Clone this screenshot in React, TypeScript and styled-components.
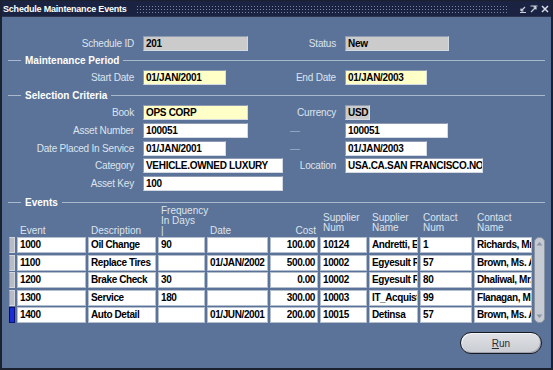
import React from 'react'
import styled, { createGlobalStyle } from 'styled-components'

const GlobalStyle = createGlobalStyle`
  html, body {
    margin: 0;
    padding: 0;
    background: #5b7398;
  }
  body {
    font-family: 'Liberation Sans', Arial, sans-serif;
  }
`

const COLS = '6px 69px 68px 47px 61px 48px 47px 49px 52px 58px 11px'

interface EventRow {
  event: string
  description: string
  frequency: string
  date: string
  cost: string
  supplierNum: string
  supplierName: string
  contactNum: string
  contactName: string
}

const events: EventRow[] = [
  { event: '1000', description: 'Oil Change', frequency: '90', date: '', cost: '100.00', supplierNum: '10124', supplierName: 'Andretti, Evan', contactNum: '1', contactName: 'Richards, Mr. Tom' },
  { event: '1100', description: 'Replace Tires', frequency: '', date: '01/JAN/2002', cost: '500.00', supplierNum: '10002', supplierName: 'Egyesult Ruhaz', contactNum: '57', contactName: 'Brown, Ms. Ann' },
  { event: '1200', description: 'Brake Check', frequency: '30', date: '', cost: '0.00', supplierNum: '10002', supplierName: 'Egyesult Ruhaz', contactNum: '80', contactName: 'Dhaliwal, Mr. Raj' },
  { event: '1300', description: 'Service', frequency: '180', date: '', cost: '300.00', supplierNum: '10003', supplierName: 'IT_Acquisto', contactNum: '99', contactName: 'Flanagan, Mr. Ian' },
  { event: '1400', description: 'Auto Detail', frequency: '', date: '01/JUN/2001', cost: '200.00', supplierNum: '10015', supplierName: 'Detinsa', contactNum: '57', contactName: 'Brown, Ms. Ann' },
]

const App: React.FC = () => {
  return (
    <>
      <GlobalStyle />
      <Window>
        <TitleBar>
          <Title>Schedule Maintenance Events</Title>
          <Dots />
          <WinIcons>
            <svg width="8" height="8" viewBox="0 0 8 8">
              <path d="M1 7.5h6M2 6l4-4M2 6V3.5M2 6h2.5" stroke="#c9cfdc" strokeWidth="1.2" fill="none" />
            </svg>
            <svg width="8" height="8" viewBox="0 0 8 8">
              <path d="M0.5 1h7M1 7l5-5M6 2v2.5M6 2H3.5" stroke="#c9cfdc" strokeWidth="1.2" fill="none" />
            </svg>
            <svg width="8" height="8" viewBox="0 0 8 8">
              <path d="M1 1l6 6M7 1l-6 6" stroke="#d6dbe6" strokeWidth="1.5" fill="none" />
            </svg>
          </WinIcons>
        </TitleBar>

        <Body>
          <Row>
            <Half $w={286}>
              <Label $w={132}>Schedule ID</Label>
              <Field $w={105} $bg="#cbcbcb">201</Field>
            </Half>
            <Half>
              <Label $w={48}>Status</Label>
              <Field $w={104} $bg="#cbcbcb">New</Field>
            </Half>
          </Row>

          <Section $mt={4}>Maintenance Period</Section>
          <Row $mt={5}>
            <Half $w={286}>
              <Label $w={132}>Start Date</Label>
              <Field $w={83} $bg="#ffffc8">01/JAN/2001</Field>
            </Half>
            <Half>
              <Label $w={48}>End Date</Label>
              <Field $w={82} $bg="#ffffc8">01/JAN/2003</Field>
            </Half>
          </Row>

          <Section $mt={5}>Selection Criteria</Section>
          <Row $mt={5}>
            <Half $w={286}>
              <Label $w={132}>Book</Label>
              <Field $w={105} $bg="#ffffc8">OPS CORP</Field>
            </Half>
            <Half>
              <Label $w={48}>Currency</Label>
              <Field $w={25} $bg="#cbcbcb">USD</Field>
            </Half>
          </Row>
          <Row $mt={2.75}>
            <Half $w={286}>
              <Label $w={132}>Asset Number</Label>
              <Field $w={105}>100051</Field>
            </Half>
            <Half>
              <Label $w={48} $dash>—</Label>
              <Field $w={103}>100051</Field>
            </Half>
          </Row>
          <Row $mt={2.75}>
            <Half $w={286}>
              <Label $w={132}>Date Placed In Service</Label>
              <Field $w={83}>01/JAN/2001</Field>
            </Half>
            <Half>
              <Label $w={48} $dash>—</Label>
              <Field $w={82}>01/JAN/2003</Field>
            </Half>
          </Row>
          <Row $mt={2.75}>
            <Half $w={286}>
              <Label $w={132}>Category</Label>
              <Field $w={140}>VEHICLE.OWNED LUXURY</Field>
            </Half>
            <Half>
              <Label $w={48}>Location</Label>
              <Field $w={138}>USA.CA.SAN FRANCISCO.NONE</Field>
            </Half>
          </Row>
          <Row $mt={2.75}>
            <Half $w={286}>
              <Label $w={132}>Asset Key</Label>
              <Field $w={140}>100</Field>
            </Half>
          </Row>

          <Section $mt={6}>Events</Section>
          <HeadRow>
            <span />
            <HeadCell>Event</HeadCell>
            <HeadCell>Description</HeadCell>
            <HeadCell>
              Frequency
              <br />
              In Days
              <br />|
            </HeadCell>
            <HeadCell>Date</HeadCell>
            <HeadCell $right>Cost</HeadCell>
            <HeadCell $raised>
              Supplier
              <br />
              Num
            </HeadCell>
            <HeadCell $raised>
              Supplier
              <br />
              Name
            </HeadCell>
            <HeadCell $raised>
              Contact
              <br />
              Num
            </HeadCell>
            <HeadCell $raised>
              Contact
              <br />
              Name
            </HeadCell>
          </HeadRow>
          <Grid>
            {events.map((e, i) => (
              <React.Fragment key={e.event}>
                <Indicator $active={i === events.length - 1} />
                <Cell>{e.event}</Cell>
                <Cell>{e.description}</Cell>
                <Cell>{e.frequency}</Cell>
                <Cell>{e.date}</Cell>
                <Cell $right>{e.cost}</Cell>
                <Cell>{e.supplierNum}</Cell>
                <Cell>{e.supplierName}</Cell>
                <Cell>{e.contactNum}</Cell>
                <Cell>{e.contactName}</Cell>
              </React.Fragment>
            ))}
            <ScrollBar>
              <svg width="7" height="5" viewBox="0 0 7 5">
                <path d="M0.5 4.5L3.5 1l3 3.5z" fill="#8d95a6" />
              </svg>
              <svg width="7" height="5" viewBox="0 0 7 5">
                <path d="M0.5 0.5L3.5 4l3-3.5z" fill="#8d95a6" />
              </svg>
            </ScrollBar>
          </Grid>

          <ButtonRow>
            <RunButton>
              <u>R</u>un
            </RunButton>
          </ButtonRow>
        </Body>
      </Window>
    </>
  )
}

export default App

const Window = styled.div`
  width: 553px;
  height: 370px;
  box-sizing: border-box;
  border: 2px solid #1c2130;
  border-top-width: 1px;
  background: #5b7398;
  display: flex;
  flex-direction: column;
  overflow: hidden;
`

const TitleBar = styled.div`
  height: 15px;
  flex: none;
  display: flex;
  align-items: center;
  padding: 0 2px 0 1px;
  background: #1a2442;
  border-bottom: 1px solid #2b3550;
`

const Title = styled.div`
  color: #ffffff;
  font-weight: bold;
  font-size: 9px;
  letter-spacing: -0.2px;
  white-space: nowrap;
`

const Dots = styled.div`
  flex: 1;
  height: 8px;
  margin: 0 10px 0 9px;
  background-image: radial-gradient(circle, #7885a4 0.7px, transparent 0.9px);
  background-size: 3px 3px;
`

const WinIcons = styled.div`
  display: flex;
  align-items: center;
  gap: 3px;
`

const Body = styled.div`
  flex: 1;
  display: flex;
  flex-direction: column;
  padding: 19px 6px 0 0;
`

const Row = styled.div<{ $mt?: number }>`
  display: flex;
  height: 15px;
  margin-top: ${p => p.$mt ?? 0}px;
`

const Half = styled.div<{ $w?: number }>`
  display: flex;
  align-items: center;
  gap: 9px;
  flex: none;
  width: ${p => (p.$w ? `${p.$w}px` : 'auto')};
`

const Label = styled.div<{ $w: number; $dash?: boolean }>`
  width: ${p => p.$w}px;
  flex: none;
  text-align: ${p => (p.$dash ? 'left' : 'right')};
  color: ${p => (p.$dash ? '#9eb0c8' : '#dde4ee')};
  font-size: 10px;
  letter-spacing: -0.2px;
  white-space: nowrap;
  padding-left: ${p => (p.$dash ? '2px' : '0')};
  box-sizing: border-box;
`

const Field = styled.div<{ $w: number; $bg?: string }>`
  width: ${p => p.$w}px;
  height: 15px;
  box-sizing: border-box;
  flex: none;
  background: ${p => p.$bg ?? '#ffffff'};
  border: 1px solid #d4dae3;
  border-top-color: #8e9bb0;
  border-left-color: #8e9bb0;
  padding: 0 2px;
  font-size: 10px;
  font-weight: bold;
  letter-spacing: -0.3px;
  line-height: 13px;
  color: #000;
  white-space: nowrap;
  overflow: hidden;
`

const Section = styled.div<{ $mt: number }>`
  display: flex;
  align-items: center;
  gap: 4px;
  height: 10px;
  margin: ${p => p.$mt}px 0 0 6px;
  color: #ffffff;
  font-size: 10px;
  font-weight: bold;
  white-space: nowrap;

  &::before {
    content: '';
    width: 13px;
    border-top: 1px solid #aab8cc;
  }
  &::after {
    content: '';
    flex: 1;
    border-top: 1px solid #aab8cc;
  }
`

const HeadRow = styled.div`
  display: grid;
  grid-template-columns: ${COLS};
  column-gap: 2px;
  height: 30px;
  margin: -1px 0 0 7px;
  align-items: end;
`

const HeadCell = styled.div<{ $right?: boolean; $raised?: boolean }>`
  color: #dde4ee;
  font-size: 10px;
  line-height: 10px;
  white-space: nowrap;
  padding: 0 ${p => (p.$right ? '2px' : '0')} ${p => (p.$raised ? '3px' : '0')} 3px;
  text-align: ${p => (p.$right ? 'right' : 'left')};
`

const Grid = styled.div`
  display: grid;
  grid-template-columns: ${COLS};
  grid-auto-rows: 16px;
  column-gap: 2px;
  row-gap: 1.5px;
  margin: 1px 0 0 7px;
`

const Indicator = styled.div<{ $active: boolean }>`
  box-sizing: border-box;
  background: ${p => (p.$active ? '#1a2ed6' : '#b8bcc4')};
  border: 1px solid ${p => (p.$active ? '#0c1470' : '#d3d6dc')};
  border-left-color: ${p => (p.$active ? '#0a0f40' : '#9a9ea8')};
`

const Cell = styled.div<{ $right?: boolean }>`
  box-sizing: border-box;
  background: #ffffff;
  border: 1px solid #b4bfcf;
  padding: 0 2px;
  font-size: 10px;
  font-weight: bold;
  letter-spacing: -0.4px;
  line-height: 14px;
  color: #000;
  white-space: nowrap;
  overflow: hidden;
  text-align: ${p => (p.$right ? 'right' : 'left')};
`

const ScrollBar = styled.div`
  grid-column: 11;
  grid-row: 1 / span 5;
  box-sizing: border-box;
  display: flex;
  flex-direction: column;
  justify-content: space-between;
  align-items: center;
  padding: 3px 0;
  background: #c7cbd3;
  border: 1px solid #8c94a3;
  border-radius: 5px;
`

const ButtonRow = styled.div`
  display: flex;
  justify-content: flex-end;
  margin: 9px 3px 0 0;
`

const RunButton = styled.button`
  width: 82px;
  height: 22px;
  box-sizing: border-box;
  border: 1px solid #161a22;
  border-radius: 11px;
  background: linear-gradient(#dfe1e5, #c9ccd2);
  box-shadow: inset 1px 1px 0 #f2f3f5, inset -1px -1px 0 #9ca1ab;
  font-family: 'Liberation Sans', Arial, sans-serif;
  font-size: 10px;
  color: #2a2d33;
  padding: 0;
  cursor: pointer;
`
